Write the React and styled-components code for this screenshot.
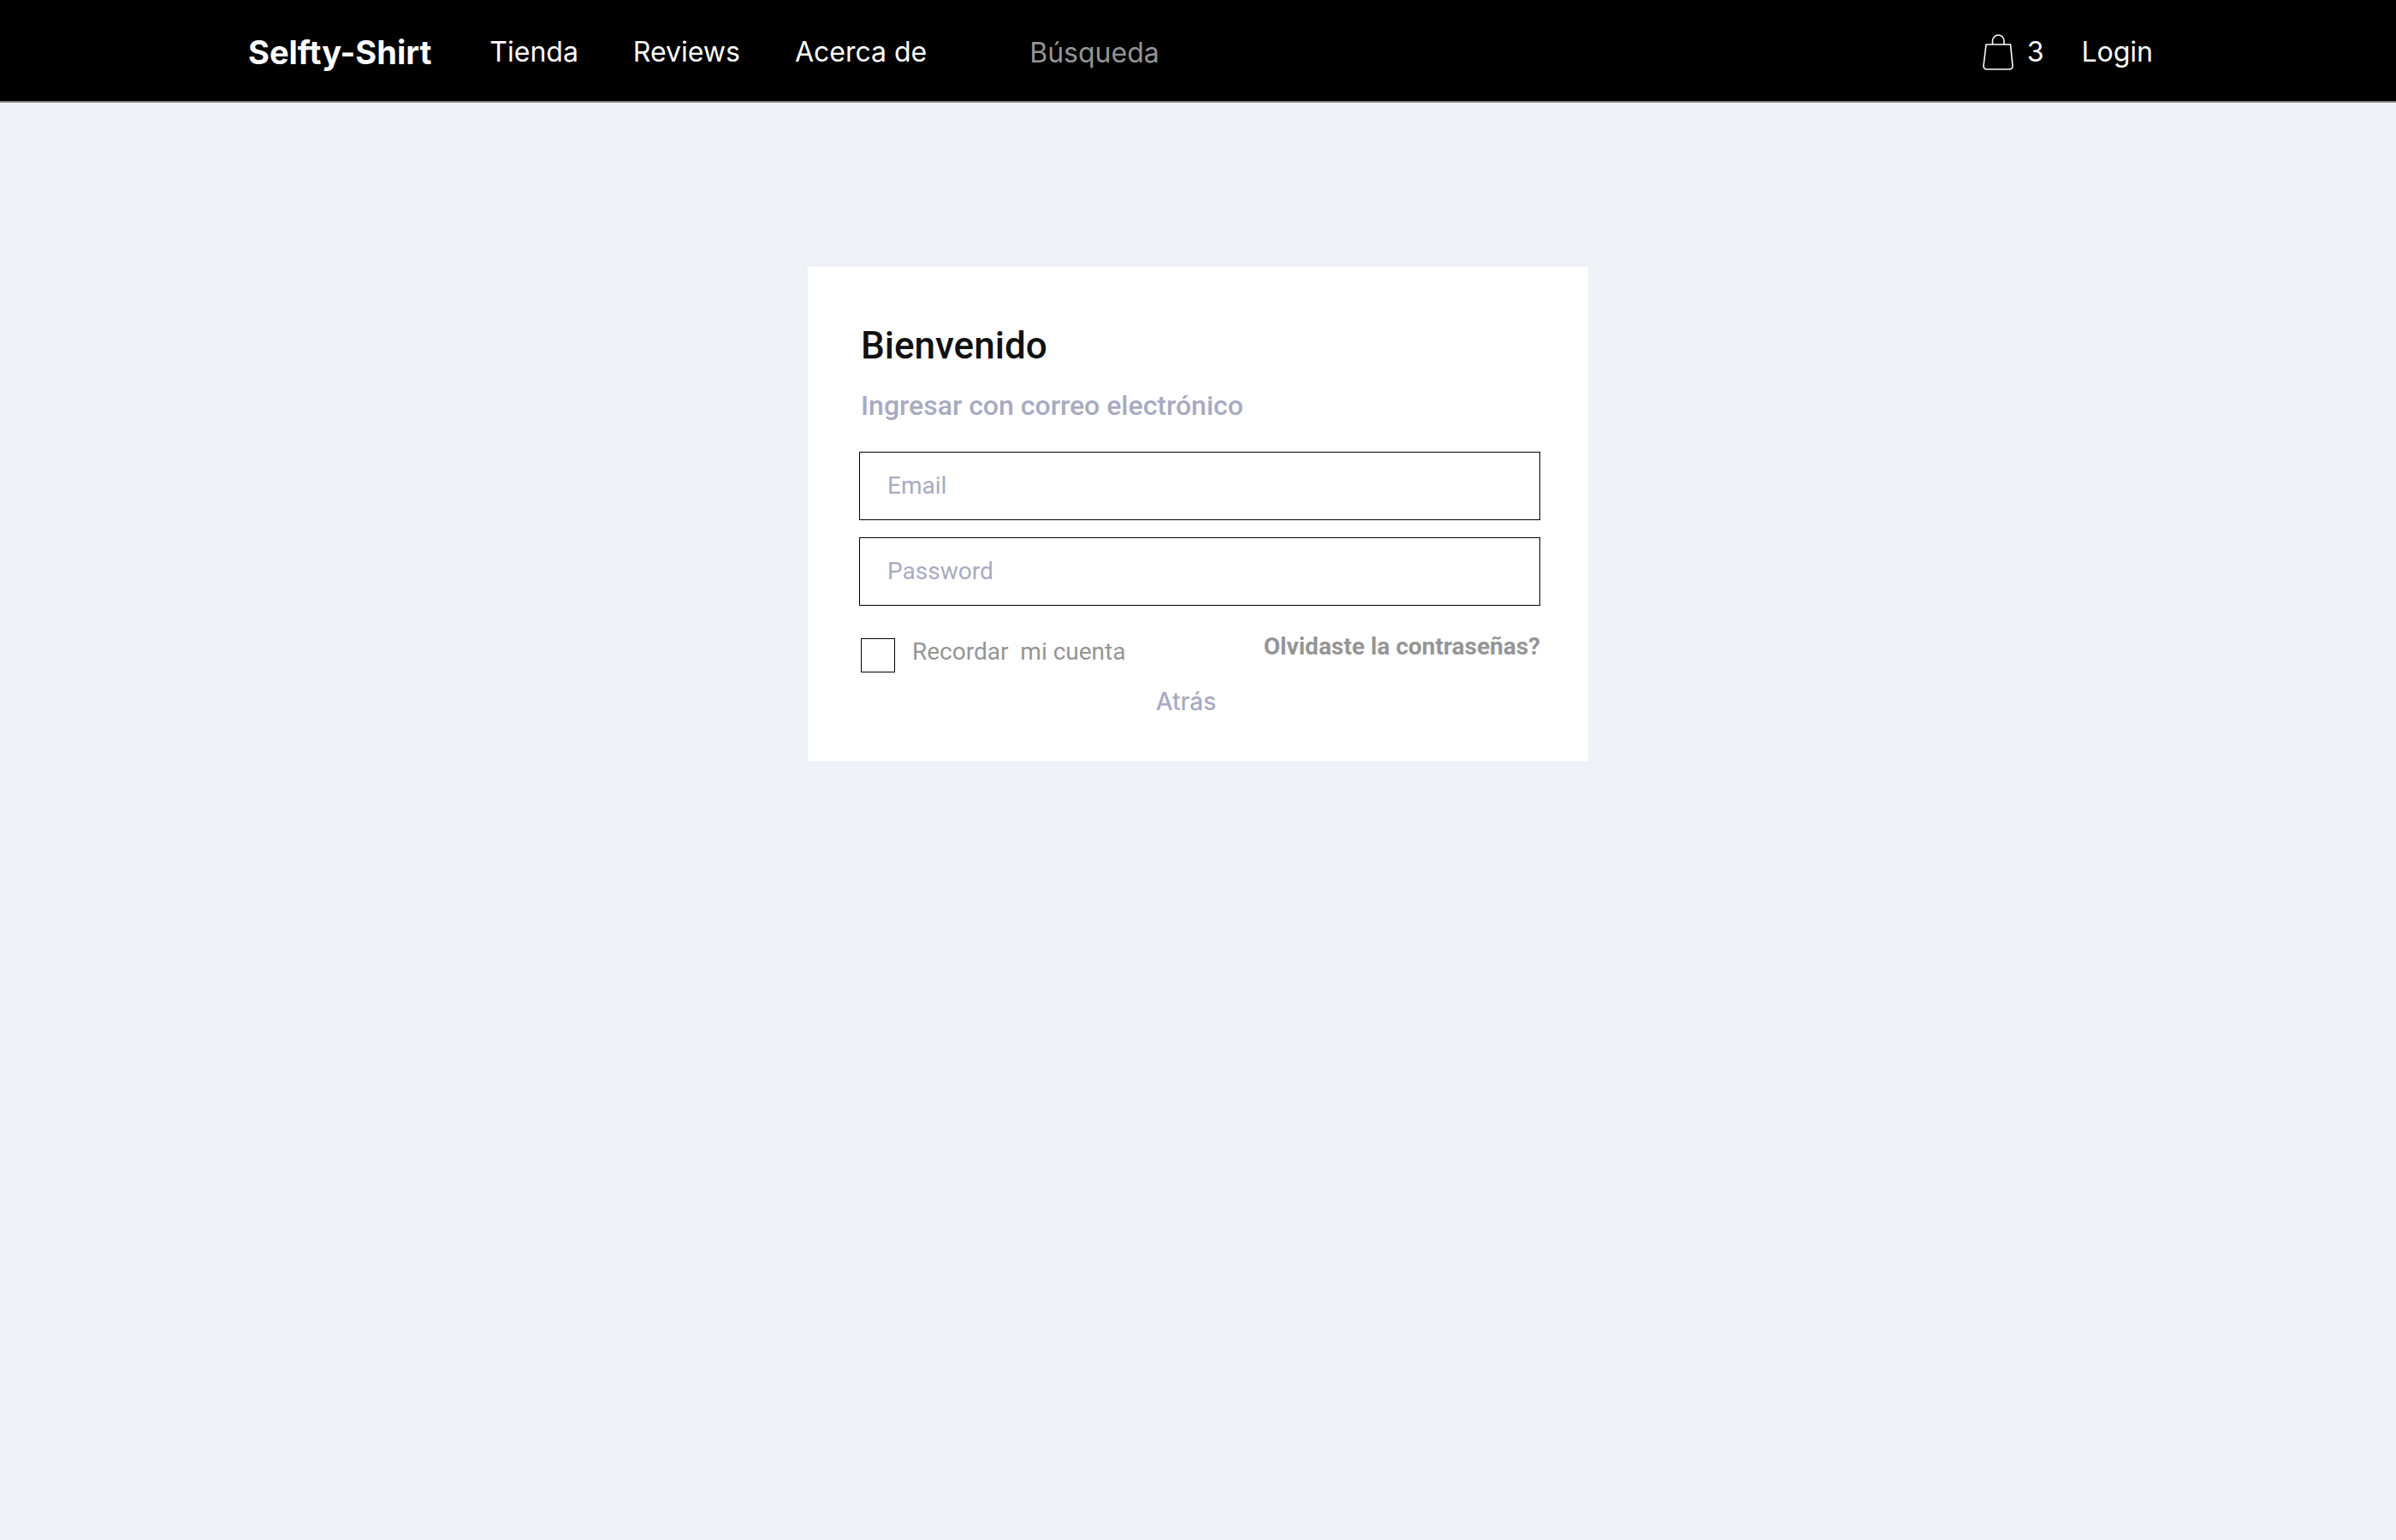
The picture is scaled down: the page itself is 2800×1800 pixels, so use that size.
import React from 'react';
import styled, { createGlobalStyle } from 'styled-components';

const GlobalStyle = createGlobalStyle`
  *, *::before, *::after { box-sizing: border-box; }
  body {
    margin: 0;
    background: #eef1f6;
    font-family: Inter, "Liberation Sans", sans-serif;
  }
`;

const Header = styled.header`
  display: flex;
  align-items: center;
  height: 120px;
  padding: 4px 284px 0 290px;
  background: #000;
  border-bottom: 2px solid #868080;
  color: #fff;
`;

const Brand = styled.a`
  color: inherit;
  font-size: 38px;
  font-weight: 700;
  line-height: 48px;
  text-decoration: none;
`;

const Nav = styled.nav`
  display: flex;
  gap: 64px;
  margin-left: 68px;
`;

const NavLink = styled.a`
  display: flex;
  align-items: center;
  gap: 16px;
  color: inherit;
  font-size: 32px;
  line-height: 48px;
  text-decoration: none;
`;

const Search = styled.input`
  flex: 0 1 480px;
  min-width: 0;
  height: 48px;
  margin-left: 120px;
  padding: 0;
  border: 0;
  outline: 0;
  background: transparent;
  color: #fff;
  font-family: inherit;
  font-size: 32px;

  &::placeholder { color: #959595; opacity: 1; }
`;

const Account = styled.div`
  display: flex;
  gap: 44px;
  margin-left: auto;
`;

const BagIcon = styled.svg`
  width: 36px;
  height: 42px;
  fill: none;
  stroke: currentColor;
  stroke-width: 1.6;
  stroke-linejoin: round;
`;

const Main = styled.main`
  display: flex;
  justify-content: center;
  padding: 192px 24px 48px;
`;

const Card = styled.form`
  display: flex;
  flex-direction: column;
  width: 100%;
  max-width: 912px;
  padding: 64px 56px 50px 60px;
  background: #fff;
  font-family: Roboto, "Liberation Sans", sans-serif;
`;

const Title = styled.h1`
  margin: 0 0 16px 2px;
  color: #111;
  font-size: 44px;
  font-weight: 500;
  line-height: 56px;
`;

const Subtitle = styled.p`
  margin: 0 0 28px 2px;
  color: #a9aac0;
  font-size: 32px;
  font-weight: 500;
  line-height: 52px;
`;

const Fields = styled.div`
  display: flex;
  flex-direction: column;
  gap: 20px;
`;

const Field = styled.input`
  width: 100%;
  height: 80px;
  padding: 0 32px 2px;
  border: 1px solid #000;
  border-radius: 0;
  background: #fff;
  color: #111;
  font-family: inherit;
  font-size: 28px;

  &::placeholder { color: #a9aac0; opacity: 1; }
`;

const Options = styled.div`
  display: flex;
  justify-content: space-between;
  margin-top: 32px;
`;

const Remember = styled.label`
  display: flex;
  gap: 20px;
  padding: 6px 0 0 2px;
  color: #959595;
  font-size: 28px;
  line-height: 32px;
  white-space: pre;
`;

const Checkbox = styled.input`
  appearance: none;
  width: 40px;
  height: 40px;
  margin: 0;
  border: 1px solid #000;
  background: #fff;

  &:checked { background: #111; }
`;

const ForgotLink = styled.a`
  color: #959595;
  font-size: 28px;
  font-weight: 700;
  line-height: 32px;
  text-decoration: none;
`;

const BackButton = styled.button`
  align-self: center;
  margin: 14px 32px 0 0;
  padding: 0;
  border: 0;
  background: none;
  color: #a9aac0;
  font-family: Inter, "Liberation Sans", sans-serif;
  font-size: 28px;
  font-weight: 500;
  line-height: 40px;
`;

const links = ['Tienda', 'Reviews', 'Acerca de'];

export default function App() {
  return (
    <>
      <GlobalStyle />
      <Header>
        <Brand href="#">Selfty-Shirt</Brand>
        <Nav>
          {links.map((label) => (
            <NavLink key={label} href="#">{label}</NavLink>
          ))}
        </Nav>
        <Search type="search" placeholder="Búsqueda" aria-label="Búsqueda" />
        <Account>
          <NavLink href="#">
            <BagIcon viewBox="0 0 36 42" aria-hidden="true">
              <path d="M4 12H32.500L35 37Q35 41 31 41H5Q1 41 1 37Z" />
              <path d="M11.500 12V8A6.700 7 0 0 1 25 8V12" />
            </BagIcon>
            3
          </NavLink>
          <NavLink href="#">Login</NavLink>
        </Account>
      </Header>
      <Main>
        <Card>
          <Title>Bienvenido</Title>
          <Subtitle>Ingresar con correo electrónico</Subtitle>
          <Fields>
            <Field type="email" placeholder="Email" aria-label="Email" />
            <Field type="password" placeholder="Password" aria-label="Password" />
          </Fields>
          <Options>
            <Remember>
              <Checkbox type="checkbox" />
              {'Recordar  mi cuenta'}
            </Remember>
            <ForgotLink href="#">Olvidaste la contraseñas?</ForgotLink>
          </Options>
          <BackButton type="button">Atrás</BackButton>
        </Card>
      </Main>
    </>
  );
}
